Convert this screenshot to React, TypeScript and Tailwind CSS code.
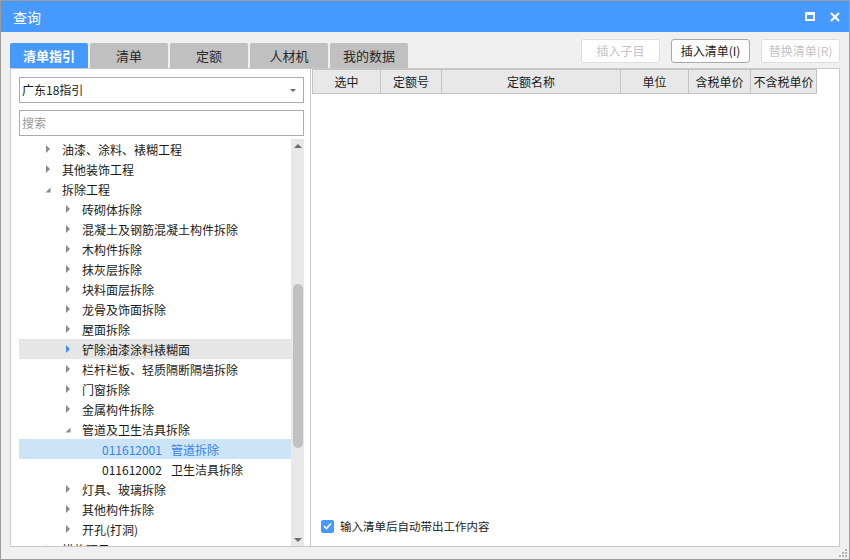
import React from 'react'

type Node = {
  label: string
  level: 1 | 2 | 3
  state?: 'open' | 'closed'
  code?: string
  hover?: boolean
  selected?: boolean
}

const nodes: Node[] = [
  { label: '油漆、涂料、裱糊工程', level: 1, state: 'closed' },
  { label: '其他装饰工程', level: 1, state: 'closed' },
  { label: '拆除工程', level: 1, state: 'open' },
  { label: '砖砌体拆除', level: 2, state: 'closed' },
  { label: '混凝土及钢筋混凝土构件拆除', level: 2, state: 'closed' },
  { label: '木构件拆除', level: 2, state: 'closed' },
  { label: '抹灰层拆除', level: 2, state: 'closed' },
  { label: '块料面层拆除', level: 2, state: 'closed' },
  { label: '龙骨及饰面拆除', level: 2, state: 'closed' },
  { label: '屋面拆除', level: 2, state: 'closed' },
  { label: '铲除油漆涂料裱糊面', level: 2, state: 'closed', hover: true },
  { label: '栏杆栏板、轻质隔断隔墙拆除', level: 2, state: 'closed' },
  { label: '门窗拆除', level: 2, state: 'closed' },
  { label: '金属构件拆除', level: 2, state: 'closed' },
  { label: '管道及卫生洁具拆除', level: 2, state: 'open' },
  { label: '管道拆除', level: 3, code: '011612001', selected: true },
  { label: '卫生洁具拆除', level: 3, code: '011612002' },
  { label: '灯具、玻璃拆除', level: 2, state: 'closed' },
  { label: '其他构件拆除', level: 2, state: 'closed' },
  { label: '开孔(打洞)', level: 2, state: 'closed' },
  { label: '措施项目', level: 1, state: 'closed' },
]

const columns = [
  { title: '选中', w: 'w-[69px]' },
  { title: '定额号', w: 'w-[61px]' },
  { title: '定额名称', w: 'w-[179px]' },
  { title: '单位', w: 'w-[68px]' },
  { title: '含税单价', w: 'w-[62px]' },
  { title: '不含税单价', w: 'w-[66px]' },
]

const tabs = ['清单指引', '清单', '定额', '人材机', '我的数据']

const Arrow = ({ state, active }: { state: 'open' | 'closed'; active?: boolean }) =>
  state === 'closed' ? (
    <span
      className={`ml-[1px] block h-0 w-0 border-y-[4px] border-l-[4px] border-y-transparent ${
        active ? 'border-l-[#3d8ff5]' : 'border-l-[#8a8a8a]'
      }`}
    />
  ) : (
    <svg width="6" height="6" viewBox="0 0 6 6" className="mt-[1px]">
      <polygon points="5.5,0.5 5.5,5.5 0.5,5.5" fill="#8a8a8a" />
    </svg>
  )

const TreeRow = ({ node }: { node: Node }) => {
  const pad = node.level === 1 ? 'pl-[26px]' : node.level === 2 ? 'pl-[46px]' : 'pl-[83px]'
  const bg = node.selected ? 'bg-[#cce4f7]' : node.hover ? 'bg-[#e6e6e6]' : ''
  return (
    <div className={`flex h-[20px] shrink-0 items-center whitespace-nowrap ${pad} ${bg}`}>
      {node.state && (
        <span className="flex w-[17px] items-center">
          <Arrow state={node.state} active={node.hover} />
        </span>
      )}
      {node.code ? (
        <span className={`pt-[1px] ${node.selected ? 'text-[#3b82e6]' : 'text-[#1a1a1a]'}`}>
          {node.code}
          <span className="ml-[9px]">{node.label}</span>
        </span>
      ) : (
        <span className="pt-[1px] text-[#1a1a1a]">{node.label}</span>
      )}
    </div>
  )
}

const ScrollBar = () => (
  <div className="flex w-[13px] shrink-0 flex-col items-center bg-[#e8e8e8]">
    <div className="flex h-[13px] w-full items-center justify-center">
      <span className="block h-0 w-0 border-x-[4px] border-b-[4px] border-x-transparent border-b-[#6b6b6b]" />
    </div>
    <div className="h-[132px]" />
    <div className="h-[164px] w-[10px] rounded-full bg-[#c1c1c1]" />
    <div className="flex-1" />
    <div className="flex h-[13px] w-full items-center justify-center">
      <span className="block h-0 w-0 border-x-[4px] border-t-[4px] border-x-transparent border-t-[#6b6b6b]" />
    </div>
  </div>
)

const Grip = () => (
  <svg width="10" height="10" viewBox="0 0 10 10">
    {[
      [7, 1],
      [4, 4],
      [7, 4],
      [1, 7],
      [4, 7],
      [7, 7],
    ].map(([x, y]) => (
      <rect key={`${x}-${y}`} x={x} y={y} width="2" height="2" fill="#b5b5b5" />
    ))}
  </svg>
)

const App = () => {
  return (
    <div
      className="flex h-[560px] w-[850px] flex-col border border-[#9c9c9c] bg-[#f0f0f0] text-[12px] text-[#1a1a1a]"
      style={{ fontFamily: '"Noto Sans CJK SC", "Noto Sans", sans-serif' }}
    >
      {/* title bar */}
      <div className="flex h-[31px] shrink-0 items-center justify-between bg-[#4599ff] pl-[12px] pr-[9px] text-white">
        <span className="text-[14px] leading-none">查询</span>
        <div className="flex items-center gap-[15px]">
          <span className="block h-[9px] w-[10px] border-2 border-t-[3px] border-white" />
          <svg width="10" height="10" viewBox="0 0 10 10">
            <path d="M1 1 L9 9 M9 1 L1 9" stroke="#fff" strokeWidth="2.2" />
          </svg>
        </div>
      </div>

      <div className="flex flex-1 flex-col px-[9px] pt-[7px]">
        {/* tabs + buttons */}
        <div className="flex h-[29px] shrink-0 items-start justify-between">
          <div className="mt-[4px] flex gap-[2px]">
            {tabs.map((t, i) => (
              <div
                key={t}
                className={`flex h-[25px] w-[78px] items-center justify-center rounded-t-[2px] text-[13px] ${
                  i === 0 ? 'bg-[#4599ff] font-bold text-white' : 'bg-[#c0c0c0] text-[#2a2a2a]'
                }`}
              >
                {t}
              </div>
            ))}
          </div>
          <div className="flex gap-[11px]">
            <button className="h-[24px] w-[79px] rounded-[3px] border border-[#dedede] bg-white text-[12px] text-[#c4c4c4]">
              插入子目
            </button>
            <button className="h-[24px] w-[79px] rounded-[3px] border border-[#a9a9a9] bg-white text-[12px] text-[#1a1a1a]">
              插入清单(I)
            </button>
            <button className="h-[24px] w-[79px] rounded-[3px] border border-[#dedede] bg-white text-[12px] text-[#c4c4c4]">
              替换清单(R)
            </button>
          </div>
        </div>

        {/* main box */}
        <div className="flex h-[479px] shrink-0 border border-[#c9c9c9] bg-white">
          {/* left panel */}
          <div className="flex w-[300px] shrink-0 flex-col border-r border-[#c9c9c9] pl-[8px] pr-[6px] pt-[8px]">
            <div className="flex h-[26px] w-[285px] items-center justify-between border border-[#ababab] pl-[2px] pr-[7px]">
              <span>广东18指引</span>
              <span className="block h-0 w-0 border-x-[3px] border-t-[3px] border-x-transparent border-t-[#6b6b6b]" />
            </div>
            <div className="mt-[7px] flex h-[26px] w-[285px] items-center border border-[#ababab] pl-[2px] text-[#9a9a9a]">
              搜索
            </div>
            <div className="mt-[3px] flex min-h-0 flex-1">
              <div className="flex min-w-0 flex-1 flex-col overflow-hidden">
                {nodes.map((n) => (
                  <TreeRow key={n.label} node={n} />
                ))}
              </div>
              <ScrollBar />
            </div>
          </div>

          {/* right panel */}
          <div className="flex flex-1 flex-col pl-[1px]">
            <div className="flex h-[25px]">
              {columns.map((c, i) => (
                <div
                  key={c.title}
                  className={`flex items-center justify-center border-y border-r border-[#c3c3c3] bg-[#e8e8e8] text-[#1a1a1a] ${c.w} ${
                    i === 0 ? 'border-l' : ''
                  }`}
                >
                  {c.title}
                </div>
              ))}
            </div>
            <div className="flex-1" />
            <div className="flex items-center gap-[6px] pb-[11px] pl-[9px]">
              <span className="flex h-[13px] w-[13px] items-center justify-center rounded-[2px] bg-[#4599ff]">
                <svg width="9" height="8" viewBox="0 0 9 8">
                  <path d="M1 4.2 L3.5 6.5 L8 1.5" stroke="#fff" strokeWidth="1.6" fill="none" />
                </svg>
              </span>
              <span className="text-[11.5px]">输入清单后自动带出工作内容</span>
            </div>
          </div>
        </div>

        <div className="flex flex-1 items-end justify-end pb-[1px]">
          <div className="-mr-[8px]">
            <Grip />
          </div>
        </div>
      </div>
    </div>
  )
}

export default App
